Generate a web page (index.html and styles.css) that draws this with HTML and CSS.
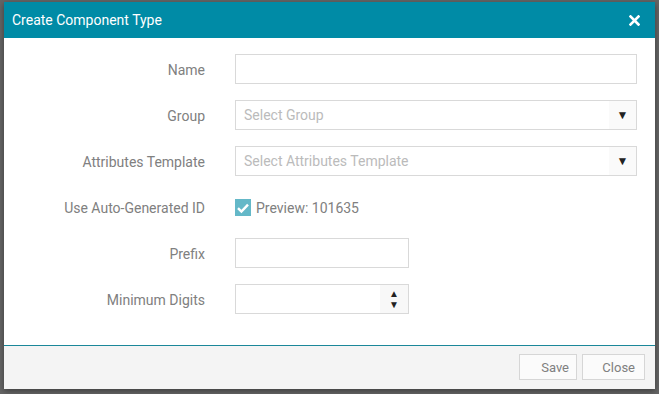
FILE: index.html
```html
<!DOCTYPE html>
<html lang="en">
<head>
  <meta charset="UTF-8" />
  <title>Create Component Type</title>
  <link rel="stylesheet" href="styles.css">
</head>
<body>
  <div class="modal">
    <div class="modal-header">
      <span class="modal-title">Create Component Type</span>
      <svg class="close-x" width="11" height="11" viewBox="0 0 11 11">
        <path d="M1.5 1.5 L9.5 9.5 M9.5 1.5 L1.5 9.5" stroke="#fff" stroke-width="2.6" stroke-linecap="square"/>
      </svg>
    </div>

    <form class="modal-body">
      <label class="field-label">Name</label>
      <div class="field"><input type="text" class="input wide"></div>

      <label class="field-label">Group</label>
      <div class="field">
        <div class="select wide">
          <span class="placeholder">Select Group</span>
          <span class="select-arrow">&#9660;</span>
        </div>
      </div>

      <label class="field-label">Attributes Template</label>
      <div class="field">
        <div class="select wide">
          <span class="placeholder">Select Attributes Template</span>
          <span class="select-arrow">&#9660;</span>
        </div>
      </div>

      <label class="field-label">Use Auto-Generated ID</label>
      <div class="field check-row">
        <span class="checkbox">
          <svg width="16" height="16" viewBox="0 0 16 16">
            <path d="M3 8.2 L6.4 11.6 L13 4.6" stroke="#fff" stroke-width="2.4" fill="none"/>
          </svg>
        </span>
        <span class="check-text">Preview: 101635</span>
      </div>

      <label class="field-label">Prefix</label>
      <div class="field"><input type="text" class="input short"></div>

      <label class="field-label">Minimum Digits</label>
      <div class="field">
        <div class="number short">
          <span class="spinner">
            <span>&#9650;</span>
            <span>&#9660;</span>
          </span>
        </div>
      </div>
    </form>

    <div class="modal-footer">
      <button type="button" class="btn btn-save">Save</button>
      <button type="button" class="btn btn-close">Close</button>
    </div>
  </div>
</body>
</html>
```

FILE: styles.css
```css
body {
  margin: 0;
  background-color: #656565;
  font-family: Roboto, "Liberation Sans", sans-serif;
  height: 394px;
  overflow: hidden;
}
.modal {
  margin: 2px 0 0 4px;
  width: 651px;
  background-color: #fff;
  box-shadow: 0 2px 6px rgba(0, 0, 0, 0.4);
}
.modal-header {
  height: 36px;
  background-color: #008ba6;
  display: flex;
  align-items: center;
  justify-content: space-between;
  padding: 0 15px 0 8px;
}
.modal-title {
  color: #fff;
  font-size: 14px;
}
.close-x {
  display: block;
}

/* form rows */
.modal-body {
  display: grid;
  grid-template-columns: 201px 1fr;
  column-gap: 30px;
  row-gap: 16px;
  padding: 16px 18px 31px 0;
  margin: 0;
  border-bottom: 1px solid #1a8799;
}
.field-label {
  text-align: right;
  font-size: 14px;
  color: #808080;
  height: 30px;
  line-height: 33px;
}
.field {
  height: 30px;
  display: flex;
  align-items: center;
}
.input, .select, .number {
  box-sizing: border-box;
  height: 30px;
  border: 1px solid #d9d9d9;
  background: #fff;
  font-family: inherit;
  font-size: 14px;
  margin: 0;
}
.wide {
  width: 402px;
}
.short {
  width: 174px;
}
.select {
  display: flex;
  align-items: center;
  justify-content: space-between;
  padding-left: 8px;
}
.placeholder {
  color: #bbb;
  font-size: 14px;
}
.select-arrow {
  height: 28px;
  width: 27px;
  background-color: #fafafa;
  font-size: 12px;
  color: #222;
  display: flex;
  align-items: center;
  justify-content: center;
}
.number {
  display: flex;
  justify-content: flex-end;
}
.spinner {
  width: 28px;
  height: 28px;
  background-color: #f8f8f8;
  display: flex;
  flex-direction: column;
  align-items: center;
  justify-content: center;
  font-size: 10px;
  line-height: 11px;
  color: #222;
}
.check-row {
  gap: 5px;
}
.checkbox {
  width: 16px;
  height: 17px;
  background-color: #64b8c8;
  display: flex;
  align-items: center;
  justify-content: center;
  margin-top: 1px;
}
.check-text {
  font-size: 14px;
  color: #808080;
  margin-top: 2px;
}

/* footer */
.modal-footer {
  background-color: #f4f4f4;
  display: flex;
  justify-content: flex-end;
  gap: 5px;
  padding: 8px 10px 9px 0;
}
.btn {
  height: 26px;
  border: 1px solid #d6d6d6;
  background-color: #fbfbfb;
  color: #808080;
  font-family: inherit;
  font-size: 13px;
  text-align: right;
  padding: 0 7px 0 0;
}
.btn-save {
  width: 58px;
}
.btn-close {
  width: 63px;
  padding-right: 9px;
}
```
